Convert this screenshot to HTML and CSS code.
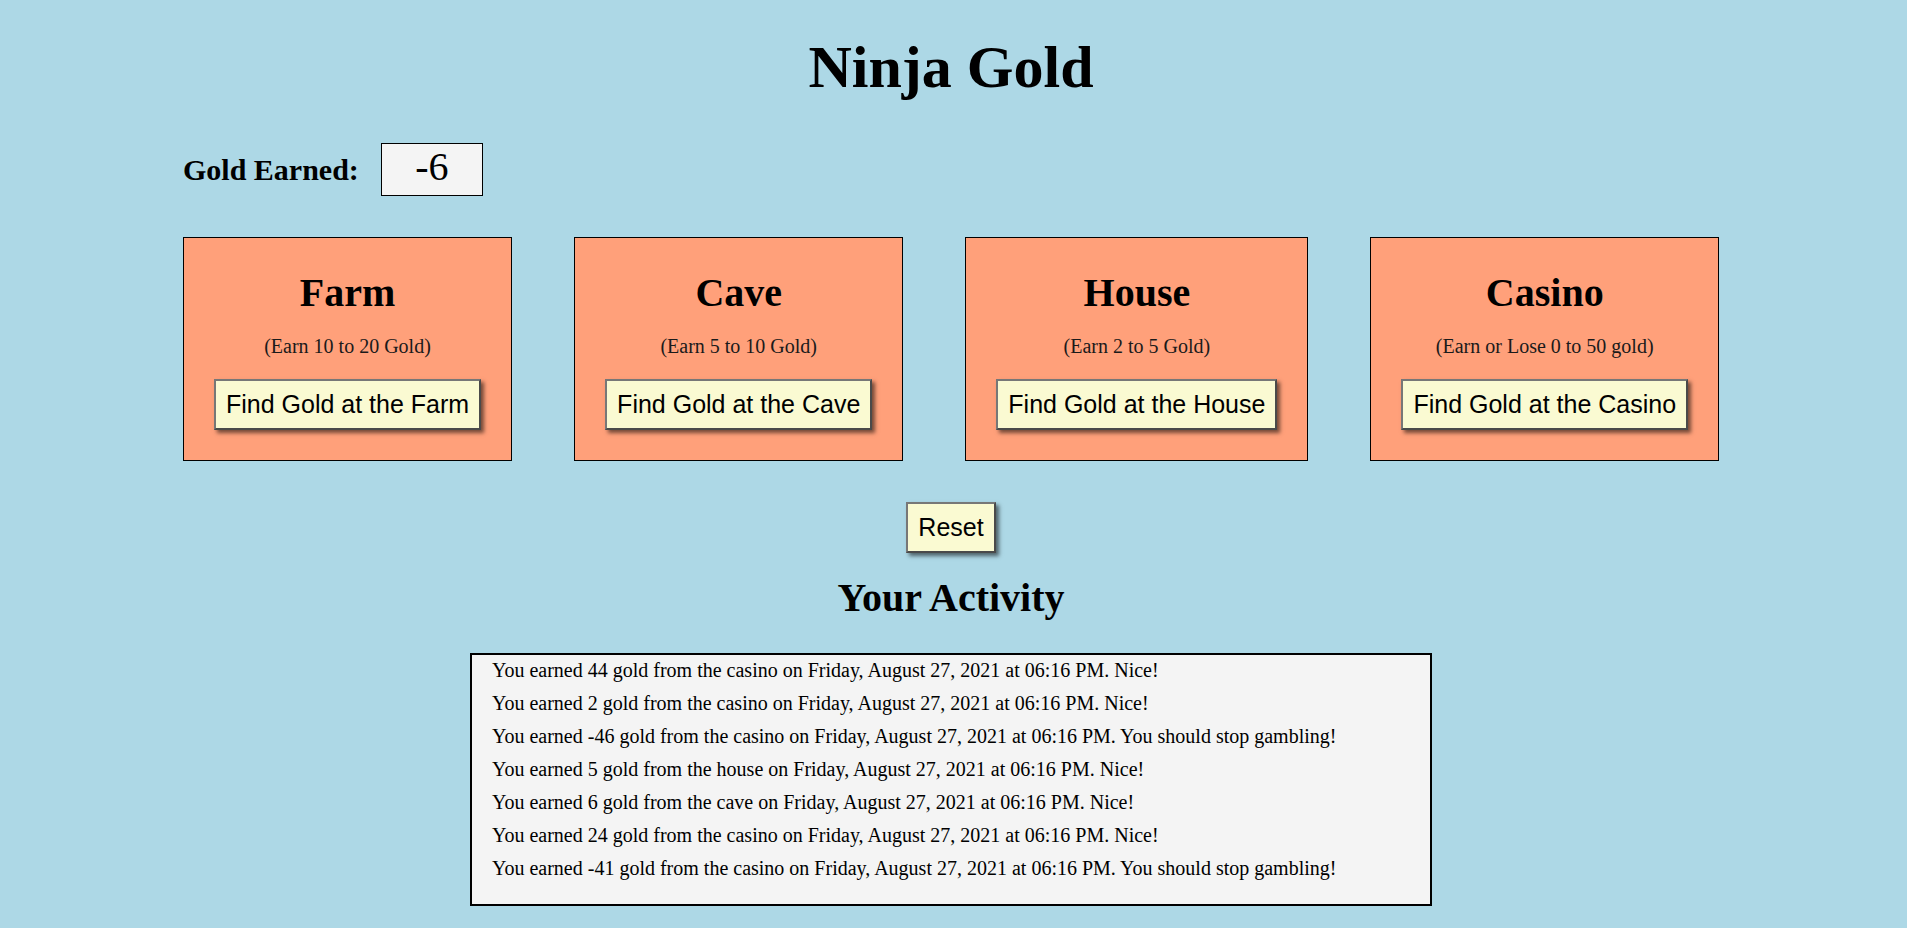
FILE: index.html
```html
<!DOCTYPE html>
<html lang="en">
<head>
<meta charset="utf-8">
<title>Ninja Gold</title>
<link rel="stylesheet" href="styles.css">
</head>
<body>
<main class="page">
  <h1 class="title">Ninja Gold</h1>
  <div class="wrap">
    <div class="gold-row">
      <span class="gold-label">Gold Earned:</span>
      <span class="gold-box">-6</span>
    </div>
    <div class="cards">
      <div class="card">
        <h2 class="card-title">Farm</h2>
        <p class="card-sub">(Earn 10 to 20 Gold)</p>
        <button class="btn">Find Gold at the Farm</button>
      </div>
      <div class="card">
        <h2 class="card-title">Cave</h2>
        <p class="card-sub">(Earn 5 to 10 Gold)</p>
        <button class="btn">Find Gold at the Cave</button>
      </div>
      <div class="card">
        <h2 class="card-title">House</h2>
        <p class="card-sub">(Earn 2 to 5 Gold)</p>
        <button class="btn">Find Gold at the House</button>
      </div>
      <div class="card">
        <h2 class="card-title">Casino</h2>
        <p class="card-sub">(Earn or Lose 0 to 50 gold)</p>
        <button class="btn">Find Gold at the Casino</button>
      </div>
    </div>
  </div>
  <div class="reset-row"><button class="btn">Reset</button></div>
  <h2 class="activity-title">Your Activity</h2>
  <div class="activity">
    <p class="entry">You earned 44 gold from the casino on Friday, August 27, 2021 at 06:16 PM. Nice!</p>
    <p class="entry">You earned 2 gold from the casino on Friday, August 27, 2021 at 06:16 PM. Nice!</p>
    <p class="entry">You earned -46 gold from the casino on Friday, August 27, 2021 at 06:16 PM. You should stop gambling!</p>
    <p class="entry">You earned 5 gold from the house on Friday, August 27, 2021 at 06:16 PM. Nice!</p>
    <p class="entry">You earned 6 gold from the cave on Friday, August 27, 2021 at 06:16 PM. Nice!</p>
    <p class="entry">You earned 24 gold from the casino on Friday, August 27, 2021 at 06:16 PM. Nice!</p>
    <p class="entry">You earned -41 gold from the casino on Friday, August 27, 2021 at 06:16 PM. You should stop gambling!</p>
  </div>
</main>
</body>
</html>
```

FILE: styles.css
```css
html, body {
  margin: 0;
  padding: 0;
}
body {
  background: #add8e6;
  font-family: "Liberation Serif", "Times New Roman", serif;
  color: #000;
  min-height: 928px;
}
.page {
  padding: 0 5px 20px 0;
  display: flex;
  flex-direction: column;
  align-items: center;
}
.title {
  font-size: 60px;
  font-weight: bold;
  margin: 33px 0 0;
  line-height: 69px;
}
.wrap {
  width: 1536px;
}
.gold-row {
  margin-top: 41px;
  display: flex;
  align-items: center;
  gap: 22px;
}
.gold-label {
  font-size: 30px;
  font-weight: bold;
}
.gold-box {
  box-sizing: border-box;
  width: 102px;
  height: 53px;
  border: 1px solid #000;
  background: #f4f4f4;
  font-size: 40px;
  line-height: 46px;
  text-align: center;
  padding-bottom: 5px;
}
.cards {
  margin-top: 41px;
  display: flex;
  justify-content: center;
  gap: 62px;
}
.card {
  background: #ffa07a;
  border: 1px solid #000;
  padding: 0 30px 30px;
  display: flex;
  flex-direction: column;
  align-items: center;
}
.card-title {
  font-size: 40px;
  font-weight: bold;
  margin: 32px 0 19px;
  line-height: 46px;
}
.card-sub {
  font-size: 20px;
  margin: 0 0 21px;
  line-height: 23px;
  color: #1a1a1a;
}
.btn {
  font-family: "Liberation Sans", Arial, sans-serif;
  font-size: 25px;
  line-height: 29px;
  padding: 9px 10px;
  background: #fafad2;
  color: #000;
  border: 2px solid #4a4a4a;
  border-top-color: #777;
  border-left-color: #777;
  box-shadow: 3px 3px 4px rgba(0, 0, 0, 0.55);
  cursor: pointer;
  white-space: nowrap;
}
.reset-row {
  margin-top: 41px;
}
.activity-title {
  font-size: 40px;
  font-weight: bold;
  margin: 22px 0 0;
  line-height: 46px;
}
.activity {
  box-sizing: border-box;
  width: 962px;
  margin-top: 32px;
  background: #f4f4f4;
  border: 2px solid #000;
  padding: 4px 20px 14px;
}
.entry {
  font-size: 20px;
  line-height: 23px;
  margin: 0 0 10px;
}
```
